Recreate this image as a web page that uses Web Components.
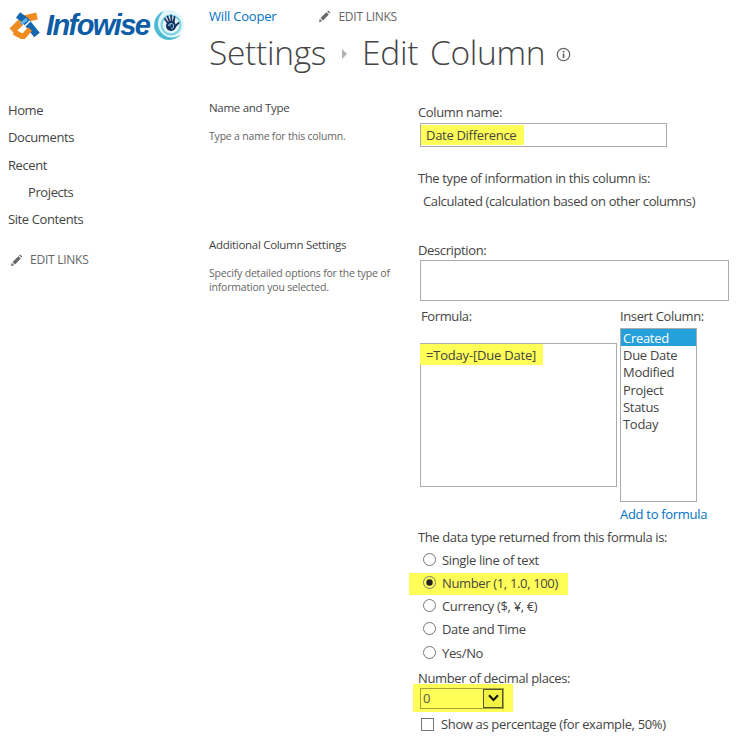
<!DOCTYPE html>
<html>
<head>
<meta charset="utf-8">
<title>Edit Column</title>
<style>
  html, body { margin: 0; background: #fff; }
  body { font: 13px/17px "Open Sans", sans-serif; color: #444; width: 742px; height: 741px; overflow: hidden; }
</style>
</head>
<body>
<edit-page></edit-page>
<script>
const PENCIL = `<svg width="13" height="13" viewBox="0 0 13 13"><path d="M1 12l.8-3.2 2.4 2.4zM2.6 8l5.8-5.8 2.4 2.4-5.8 5.8zM9.2 1.4l1-.9 2 2-.9 1z" fill="#666"/></svg>`;

class EditLinks extends HTMLElement {
  constructor() {
    super();
    this.attachShadow({mode: 'open'}).innerHTML = `
      <style>
        :host { display: flex; align-items: center; gap: 7px; color: #666; font-size: 12px; letter-spacing: -.25px; line-height: 16px; }
        svg { display: block; }
      </style>
      ${PENCIL}<span>EDIT LINKS</span>`;
  }
}
customElements.define('edit-links', EditLinks);

class SiteLogo extends HTMLElement {
  constructor() {
    super();
    this.attachShadow({mode: 'open'}).innerHTML = `
      <style>
        :host { display: flex; align-items: center; height: 30px; padding-left: 9px; margin-top: 2px; }
        span { font: italic 700 29px/30px "Liberation Sans", sans-serif; color: #0d5ca6; letter-spacing: -1.6px; margin: 0 5px 0 6px; }
        svg { display: block; flex: none; }
      </style>
      <svg width="31" height="27" viewBox="0 0 31 27" fill="none" stroke-linejoin="round">
        <path d="M3 19L15 7l13-3" stroke="#f08c1f" stroke-width="7"/>
        <path d="M9 3l7 5 12 15" stroke="#1468b2" stroke-width="7"/>
        <path d="M5 20l9 5 7-8" stroke="#f08c1f" stroke-width="5.500"/>
        <path d="M12 12l6-5" stroke="#5ab4e6" stroke-width="3"/>
        <path d="M16 14l5-5" stroke="#fff" stroke-width="1.500"/>
      </svg>
      <span>Infowise</span>
      <svg width="30" height="30" viewBox="0 0 30 30">
        <circle cx="15" cy="15" r="15" fill="#e2f5f8"/>
        <path d="M10 .9A15 15 0 0 0 15 30c5 0 9-2.200 12-5.500-3 2-6 3-9 3C10 27.500 4 21 4 14 4 9 6.500 4 10 .9z" fill="#4dbbd3"/>
        <circle cx="17" cy="15" r="10.500" fill="#7ad2e2"/>
        <circle cx="17" cy="15" r="8.500" fill="#e2f5f8"/>
        <g stroke="#1b2f5c" stroke-width="1.800" stroke-linecap="round">
          <path d="M11 9l3.500 5M13.500 6.500l2.500 6M17 5.500l.8 7M20.500 7l-1 6.500M24.500 13l-3.500 3.500"/>
        </g>
        <circle cx="17" cy="16" r="5" fill="#1b2f5c"/>
        <path d="M14.500 16a2.600 2.600 0 1 1 2.600 2.600M17 13.800a1.800 1.800 0 0 0-.8 2.700" fill="none" stroke="#7ad2e2" stroke-width="1"/>
      </svg>`;
  }
}
customElements.define('site-logo', SiteLogo);

class PageTitle extends HTMLElement {
  constructor() {
    super();
    this.attachShadow({mode: 'open'}).innerHTML = `
      <style>
        :host { display: block; }
        .top { display: flex; align-items: center; height: 17px; gap: 42px; }
        a { color: #0072c6; font-size: 13px; letter-spacing: -.2px; }
        h1 { margin: 4px 0 0; display: flex; align-items: center; font: 300 33.5px/46px "Open Sans", sans-serif; color: #444; letter-spacing: -.3px; word-spacing: 3.500px; }
        .sep { width: 0; height: 0; border-left: 5px solid #b1b1b1; border-top: 5px solid transparent; border-bottom: 5px solid transparent; margin: 4px 15px 0 16px; }
        svg { display: block; margin: 5px 0 0 11px; }
      </style>
      <div class="top"><a>Will Cooper</a><edit-links></edit-links></div>
      <h1><span>Settings</span><i class="sep"></i><span>Edit Column</span>
        <svg width="15" height="15" viewBox="0 0 15 15"><circle cx="7.500" cy="7.500" r="6.200" fill="none" stroke="#666" stroke-width="1.300"/><rect x="6.700" y="6.500" width="1.700" height="4.600" fill="#666"/><rect x="6.700" y="3.800" width="1.700" height="1.700" fill="#666"/></svg>
      </h1>`;
  }
}
customElements.define('page-title', PageTitle);

class SideNav extends HTMLElement {
  constructor() {
    super();
    this.attachShadow({mode: 'open'}).innerHTML = `
      <style>
        :host { display: block; padding: 5px 0 0 8px; }
        div { height: 27.3px; line-height: 27px; color: #444; letter-spacing: -.4px; }
        .sub { padding-left: 20px; }
        edit-links { margin: 19px 0 0 2px; }
      </style>
      <div>Home</div><div>Documents</div><div>Recent</div><div class="sub">Projects</div><div>Site Contents</div>
      <edit-links></edit-links>`;
  }
}
customElements.define('side-nav', SideNav);

class FormSection extends HTMLElement {
  constructor() {
    super();
    this.attachShadow({mode: 'open'}).innerHTML = `
      <style>
        :host { display: grid; grid-template-columns: 209px 1fr; }
        h3 { margin: 0 0 13px; font: 400 11.5px/16px "Open Sans", sans-serif; letter-spacing: -.3px; color: #444; }
        p { margin: 0; font-size: 10.5px; line-height: 14px; letter-spacing: -.2px; color: #666; width: 190px; }
        .fields { padding-top: 4px; }
      </style>
      <div><h3></h3><p></p></div>
      <div class="fields"><slot></slot></div>`;
    this.shadowRoot.querySelector('h3').textContent = this.getAttribute('title');
    this.shadowRoot.querySelector('p').textContent = this.getAttribute('desc');
  }
}
customElements.define('form-section', FormSection);

class ChoiceRow extends HTMLElement {
  constructor() {
    super();
    const on = this.hasAttribute('checked');
    const box = this.hasAttribute('box');
    this.attachShadow({mode: 'open'}).innerHTML = `
      <style>
        :host { display: flex; align-items: center; height: 23.1px; gap: 6px; padding-left: 5px; letter-spacing: -.35px; box-sizing: border-box; }
        :host([box]) { padding-left: 3px; }
        :host([checked]) { background: #ffff57; margin-left: -9px; padding-left: 14px; width: 159px; height: 22px; margin-top: .6px; margin-bottom: .6px; }
        svg { display: block; flex: none; }
      </style>
      ${box
        ? `<svg width="13" height="13" viewBox="0 0 13 13" style="margin-right:1px"><rect x=".5" y=".5" width="12" height="12" fill="#fff" stroke="#777"/></svg>`
        : `<svg width="13" height="13" viewBox="0 0 13 13" style="margin-top:-2px"><circle cx="6.500" cy="6.500" r="6" fill="${on ? '#ffff57' : '#fff'}" stroke="#777"/>${on ? '<circle cx="6.500" cy="6.500" r="3.200" fill="#222"/>' : ''}</svg>`}
      <span><slot></slot></span>`;
  }
}
customElements.define('choice-row', ChoiceRow);

class InsertList extends HTMLElement {
  constructor() {
    super();
    this.attachShadow({mode: 'open'}).innerHTML = `
      <style>
        :host { display: block; box-sizing: border-box; width: 77px; height: 174px; border: 1px solid #ababab; letter-spacing: -.3px; }
        div { height: 17.2px; line-height: 19px; padding-left: 2px; }
        .sel { background: #25a0da; color: #fff; }
      </style>
      <div class="sel">Created</div><div>Due Date</div><div>Modified</div><div>Project</div><div>Status</div><div>Today</div>`;
  }
}
customElements.define('insert-list', InsertList);

class DecimalSelect extends HTMLElement {
  constructor() {
    super();
    this.attachShadow({mode: 'open'}).innerHTML = `
      <style>
        :host { display: block; width: 100px; height: 28px; margin: -3px 0 1px -5px; background: #ffff57; padding: 4px 0 0 7px; box-sizing: border-box; }
        .box { display: flex; width: 84px; height: 21px; box-sizing: border-box; border: 1px solid #a3a33a; line-height: 19px; color: #555; }
        .val { flex: 1; padding-left: 2px; }
        .btn { width: 18px; border: 1px solid #55552a; background: #f2f244; display: flex; align-items: center; justify-content: center; }
        svg { display: block; }
      </style>
      <div class="box"><span class="val">0</span><span class="btn"><svg width="11" height="8" viewBox="0 0 11 8"><path d="M1 1.200l4.500 4.800 4.500-4.800" fill="none" stroke="#111" stroke-width="2"/></svg></span></div>`;
  }
}
customElements.define('decimal-select', DecimalSelect);

class EditPage extends HTMLElement {
  constructor() {
    super();
    this.attachShadow({mode: 'open'}).innerHTML = `
      <style>
        :host { display: block; }
        .head { display: grid; grid-template-columns: 209px 1fr; padding-top: 8px; height: 92px; box-sizing: border-box; }
        .body { display: grid; grid-template-columns: 209px 1fr; }
        .main { padding-top: 8px; }
        .lbl { letter-spacing: -.38px; }
        .input { box-sizing: border-box; border: 1px solid #ababab; margin-left: 2px; }
        .name { width: 247px; height: 24px; margin-top: 2px; }
        .hl { display: block; background: #ffff57; line-height: 20px; }
        .name .hl { width: 103px; height: 20px; margin: 1px 0 0 0; padding-left: 5px; box-sizing: border-box; letter-spacing: -.3px; }
        .desc { width: 309px; height: 41px; margin-top: 1px; }
        .type { margin-top: 23px; }
        .calc { margin: 6px 0 0 5px; }
        .sec2 { margin-top: 27px; }
        .formula { display: flex; margin-top: 7px; }
        .fcol { width: 202px; }
        .area { width: 197px; height: 144px; margin-top: 18px; }
        .area .hl { width: 123px; height: 21px; margin: 0 0 0 -1px; padding-left: 6px; box-sizing: border-box; letter-spacing: -.2px; line-height: 22px; }
        a { color: #0072c6; letter-spacing: -.3px; display: block; margin: 4px 0 0; }
        .ret { margin-top: 6px; }
        .dec { margin-top: 5px; }
      </style>
      <div class="head"><site-logo></site-logo><page-title></page-title></div>
      <div class="body">
        <side-nav></side-nav>
        <div class="main">
          <form-section title="Name and Type" desc="Type a name for this column.">
            <div class="lbl">Column name:</div>
            <div class="input name"><span class="hl">Date Difference</span></div>
            <div class="lbl type">The type of information in this column is:</div>
            <div class="lbl calc">Calculated (calculation based on other columns)</div>
          </form-section>
          <form-section class="sec2" title="Additional Column Settings" desc="Specify detailed options for the type of information you selected.">
            <div class="lbl" style="margin-top:1px">Description:</div>
            <div class="input desc"></div>
            <div class="formula">
              <div class="fcol">
                <div class="lbl" style="margin-left:3px">Formula:</div>
                <div class="input area"><span class="hl">=Today-[Due Date]</span></div>
              </div>
              <div>
                <div class="lbl">Insert Column:</div>
                <insert-list style="margin-top:3px"></insert-list>
                <a>Add to formula</a>
              </div>
            </div>
            <div class="lbl ret">The data type returned from this formula is:</div>
            <choice-row style="margin-top:3px">Single line of text</choice-row>
            <choice-row checked>Number (1, 1.0, 100)</choice-row>
            <choice-row>Currency ($, ¥, €)</choice-row>
            <choice-row>Date and Time</choice-row>
            <choice-row>Yes/No</choice-row>
            <div class="lbl dec">Number of decimal places:</div>
            <decimal-select></decimal-select>
            <choice-row box>Show as percentage (for example, 50%)</choice-row>
          </form-section>
        </div>
      </div>`;
  }
}
customElements.define('edit-page', EditPage);
</script>
</body>
</html>
